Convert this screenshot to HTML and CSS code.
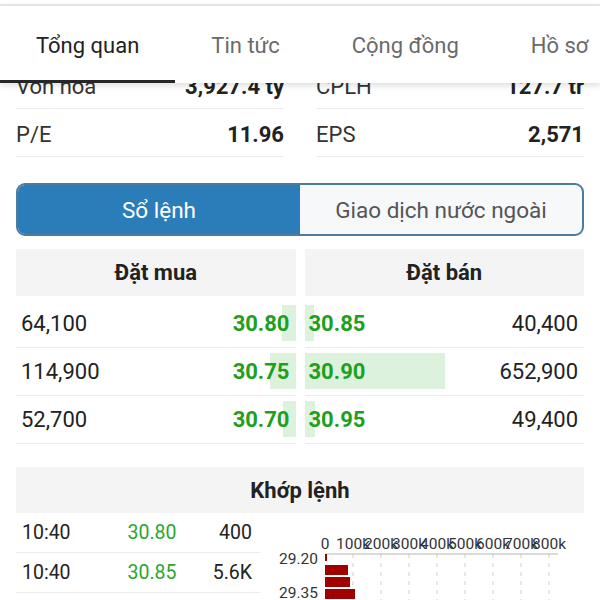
FILE: index.html
```html
<!DOCTYPE html>
<html lang="vi">
<head>
    <meta charset="UTF-8">
    <title>Tổng quan</title>
    <link rel="stylesheet" href="styles.css">
</head>
<body>
    <header class="tabbar">
        <nav class="tabs">
            <a class="tab active">Tổng quan</a>
            <a class="tab">Tin tức</a>
            <a class="tab">Cộng đồng</a>
            <a class="tab">Hồ sơ</a>
        </nav>
    </header>

    <main class="page">
        <section class="stats">
            <div class="stat"><span>Vốn hóa</span><b>3,927.4 tỷ</b></div>
            <div class="stat"><span>CPLH</span><b>127.7 tr</b></div>
            <div class="stat"><span>P/E</span><b>11.96</b></div>
            <div class="stat"><span>EPS</span><b>2,571</b></div>
        </section>

        <div class="segmented">
            <div class="seg seg-active">Sổ lệnh</div>
            <div class="seg">Giao dịch nước ngoài</div>
        </div>

        <section class="book">
            <div class="book-side buy">
                <div class="book-head">Đặt mua</div>
                <div class="book-row"><span class="vol-bar" style="width: 14px"></span><span>64,100</span><b>30.80</b></div>
                <div class="book-row"><span class="vol-bar" style="width: 26px"></span><span>114,900</span><b>30.75</b></div>
                <div class="book-row"><span class="vol-bar" style="width: 13px"></span><span>52,700</span><b>30.70</b></div>
            </div>
            <div class="book-side sell">
                <div class="book-head">Đặt bán</div>
                <div class="book-row"><span class="vol-bar" style="width: 9px"></span><b>30.85</b><span>40,400</span></div>
                <div class="book-row"><span class="vol-bar" style="width: 140px"></span><b>30.90</b><span>652,900</span></div>
                <div class="book-row"><span class="vol-bar" style="width: 10px"></span><b>30.95</b><span>49,400</span></div>
            </div>
        </section>

        <section class="match">
            <div class="match-head">Khớp lệnh</div>
            <div class="match-body">
                <div class="ticks">
                    <div class="tick"><span>10:40</span><span class="tick-price">30.80</span><span class="tick-vol">400</span></div>
                    <div class="tick"><span>10:40</span><span class="tick-price">30.85</span><span class="tick-vol">5.6K</span></div>
                </div>
                <svg class="chart" width="324" height="88" viewBox="0 0 324 88">
                    <g stroke="#cfcfcf" stroke-dasharray="4 5">
                        <line x1="93" y1="41" x2="93" y2="88"/>
                        <line x1="121" y1="41" x2="121" y2="88"/>
                        <line x1="149" y1="41" x2="149" y2="88"/>
                        <line x1="177" y1="41" x2="177" y2="88"/>
                        <line x1="205" y1="41" x2="205" y2="88"/>
                        <line x1="233" y1="41" x2="233" y2="88"/>
                        <line x1="261" y1="41" x2="261" y2="88"/>
                        <line x1="289" y1="41" x2="289" y2="88"/>
                    </g>
                    <line x1="65" y1="41" x2="298" y2="41" stroke="#b5b5b5"/>
                    <g class="axis" text-anchor="middle">
                        <text x="65" y="36">0</text>
                        <text x="93" y="36">100k</text>
                        <text x="121" y="36">200k</text>
                        <text x="149" y="36">300k</text>
                        <text x="177" y="36">400k</text>
                        <text x="205" y="36">500k</text>
                        <text x="233" y="36">600k</text>
                        <text x="261" y="36">700k</text>
                        <text x="289" y="36">800k</text>
                    </g>
                    <g class="axis" text-anchor="end">
                        <text x="58" y="51">29.20</text>
                        <text x="58" y="85">29.35</text>
                    </g>
                    <g fill="#a00000">
                        <rect x="65" y="41" width="2" height="7"/>
                        <rect x="65" y="52" width="23" height="10"/>
                        <rect x="65" y="64" width="25" height="10"/>
                        <rect x="65" y="76" width="30" height="10"/>
                        <rect x="65" y="87" width="48" height="10"/>
                    </g>
                </svg>
            </div>
        </section>
    </main>
</body>
</html>
```

FILE: styles.css
```css
body {
    margin: 0;
    padding: 0;
    background: #fff;
    font-family: Roboto, "Liberation Sans", sans-serif;
    color: #222;
    height: 600px;
    overflow: hidden;
}

.tabbar {
    position: fixed;
    top: 0;
    left: 0;
    right: 0;
    z-index: 5;
    padding-top: 4px;
    background: #fff;
}
.tabs {
    display: flex;
    height: 77px;
    border-top: 2px solid #e4e4e4;
    background: #fff;
    box-shadow: 0 3px 6px rgba(0, 0, 0, 0.12);
    white-space: nowrap;
    overflow: hidden;
}
.tab {
    display: flex;
    align-items: center;
    box-sizing: border-box;
    height: 100%;
    padding: 4px 36px 0;
    border-bottom: 3px solid transparent;
    font-size: 22px;
    color: #6a6a6a;
}
.tab.active {
    color: #222;
    border-bottom-color: #262626;
}

.page {
    padding: 61px 16px 0;
}

.stats {
    display: grid;
    grid-template-columns: 1fr 1fr;
    column-gap: 32px;
}
.stat {
    display: flex;
    justify-content: space-between;
    align-items: center;
    box-sizing: border-box;
    height: 48px;
    padding-top: 4px;
    border-bottom: 1px solid #ececec;
    font-size: 22px;
    color: #333;
}
.stat b {
    color: #222;
}

.segmented {
    display: grid;
    grid-template-columns: 1fr 1fr;
    height: 53px;
    box-sizing: border-box;
    margin-top: 26px;
    border: 2px solid #4f7c9e;
    border-radius: 9px;
    overflow: hidden;
    background: #f7f8fa;
}
.seg {
    display: flex;
    align-items: center;
    justify-content: center;
    font-size: 22.5px;
    color: #555;
}
.seg-active {
    background: #2b7db9;
    color: #fff;
}

.book {
    display: grid;
    grid-template-columns: 1fr 1fr;
    column-gap: 9px;
    margin-top: 13px;
}
.book-head {
    display: flex;
    align-items: center;
    justify-content: center;
    height: 47px;
    margin-bottom: 4px;
    background: #f4f4f4;
    font-size: 22px;
    font-weight: 700;
}
.book-row {
    position: relative;
    display: flex;
    justify-content: space-between;
    align-items: center;
    box-sizing: border-box;
    height: 48px;
    border-bottom: 1px solid #ececec;
    font-size: 22px;
    color: #222;
}
.book-row span,
.book-row b {
    position: relative;
}
.book-row b {
    color: #1ea01e;
}
.buy .book-row {
    padding: 0 6px 0 5px;
}
.sell .book-row {
    padding: 0 6px 0 4px;
}
.book-row .vol-bar {
    position: absolute;
    top: 5px;
    bottom: 6px;
    background: #dcf2dc;
}
.buy .vol-bar {
    right: 0;
}
.sell .vol-bar {
    left: 0;
}

.match {
    margin-top: 23px;
}
.match-head {
    display: flex;
    align-items: center;
    justify-content: center;
    height: 46px;
    background: #f4f4f4;
    font-size: 22px;
    font-weight: 700;
}
.match-body {
    display: flex;
}
.ticks {
    width: 244px;
}
.tick {
    display: grid;
    grid-template-columns: 88px 84px 1fr;
    align-items: center;
    box-sizing: border-box;
    height: 40px;
    padding: 0 8px 0 6px;
    border-bottom: 1px solid #ececec;
    font-size: 19.5px;
    color: #222;
}
.tick-price {
    text-align: center;
    color: #2ca52c;
}
.tick-vol {
    text-align: right;
}
.chart {
    display: block;
}
.axis text {
    font-family: Roboto, "Liberation Sans", sans-serif;
    font-size: 15.5px;
    fill: #333;
}
```
